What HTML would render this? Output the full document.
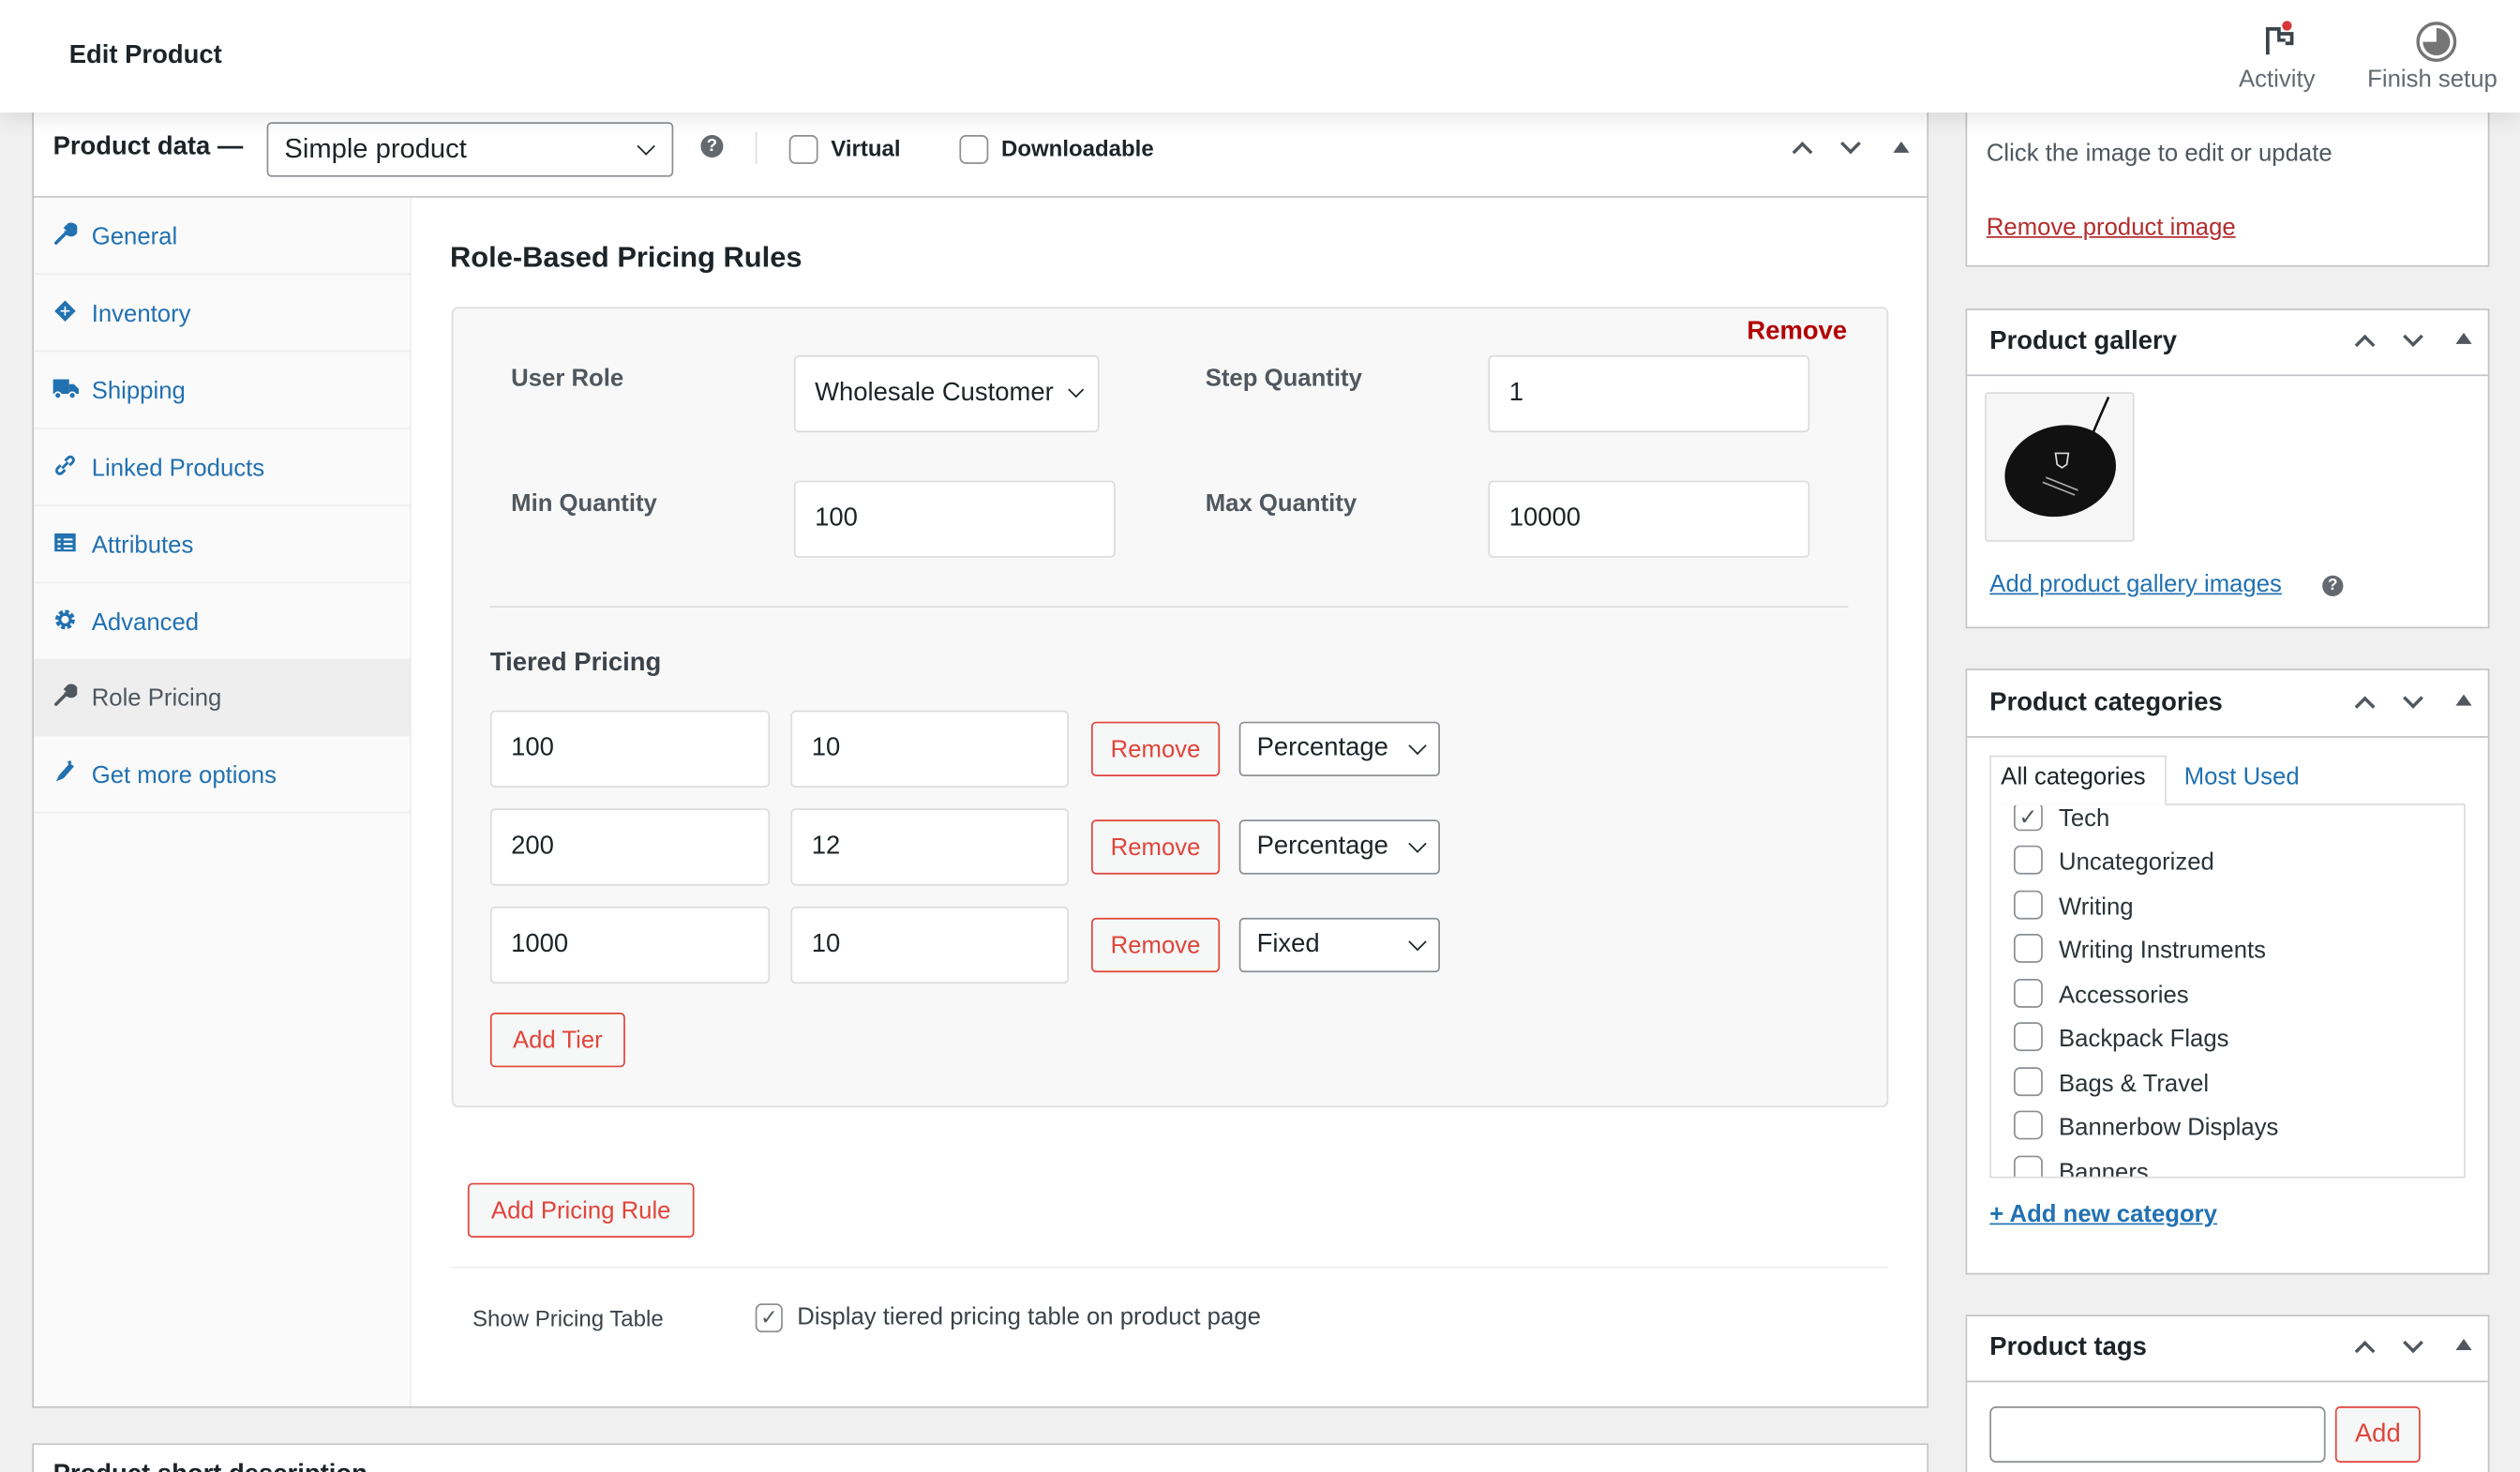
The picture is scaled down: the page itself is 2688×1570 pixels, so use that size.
<!DOCTYPE html>
<html><head><meta charset="utf-8"><style>
*{box-sizing:border-box;margin:0;padding:0}
html,body{width:2688px;height:1570px;overflow:hidden;background:#f0f0f1}
#w{position:absolute;left:0;top:0;width:1568px;height:916px;overflow:hidden;transform:scale(1.71429);transform-origin:0 0;font-family:"Liberation Sans",Arial,sans-serif;color:#1d2327;font-size:15px}
.a{position:absolute}
.t{position:absolute;white-space:nowrap;line-height:1}
.box{position:absolute;background:#fff;border:1px solid #c3c4c7}
.inp{position:absolute;background:#fff;border:1px solid #dcdcde;border-radius:3px;font-size:16px;padding-left:12px;display:flex;align-items:center}
.sel{position:absolute;background:#fff;border:1px solid #8c8f94;border-radius:3px;font-size:16px;padding-left:10px;display:flex;align-items:center}
.btnr{position:absolute;background:#f6f7f7;border:1px solid #e0453a;border-radius:3px;color:#e0453a;font-size:15px;display:flex;align-items:center;justify-content:center}
.chev{position:absolute;width:8px;height:8px;border-right:1.6px solid #1d2327;border-bottom:1.6px solid #1d2327;transform:rotate(45deg)}
.cb{position:absolute;width:18px;height:18px;border:1px solid #8c8f94;border-radius:4px;background:#fff}
.tab{position:absolute;left:21px;width:235px;height:48px;border-bottom:1px solid #eee;color:#2271b1;font-size:15px}
.tab span{position:absolute;left:36px;top:16px}
.tab svg{position:absolute;left:12px;top:15px}
.lbl{position:absolute;font-weight:bold;color:#50575e;font-size:15px;white-space:nowrap}
.arr{position:absolute;width:9px;height:9px;border-left:2px solid #50575e;border-top:2px solid #50575e}
.tri{position:absolute;width:0;height:0;border-left:5px solid transparent;border-right:5px solid transparent;border-bottom:7px solid #50575e}
.h3{position:absolute;font-weight:bold;font-size:16px;white-space:nowrap}
.cat{position:absolute;left:1253px;font-size:15px;color:#2c3338;white-space:nowrap}
.cat .cb{position:relative;display:inline-block;vertical-align:middle;margin-right:10px;top:-2px}
</style></head><body><div id="w">

<!-- header -->
<div class="a" style="left:0;top:0;width:1568px;height:70px;background:#fff;box-shadow:0 2px 14px rgba(0,0,0,.12);z-index:5">
 <div class="t" style="left:43px;top:27px;font-size:16px;font-weight:bold">Edit Product</div>
 <svg class="a" style="left:1408px;top:12px" width="24" height="24" viewBox="0 0 24 24"><path d="M3 22V6h7v3h8v6h-4" fill="none" stroke="#3c434a" stroke-width="2.2"/><path d="M10 9v4h4" fill="none" stroke="#3c434a" stroke-width="2"/><circle cx="15" cy="4" r="3" fill="#d63638"/></svg>
 <div class="t" style="left:1393px;top:42px;font-size:15px;color:#646970">Activity</div>
 <svg class="a" style="left:1503px;top:13px" width="26" height="26" viewBox="0 0 26 26"><circle cx="13" cy="13" r="11.5" fill="none" stroke="#757575" stroke-width="2"/><path d="M13 4.5A8.5 8.5 0 1 1 4.5 13H13Z" fill="#757575"/></svg>
 <div class="t" style="left:1473px;top:42px;font-size:15px;color:#646970">Finish setup</div>
</div>

<!-- main box -->
<div class="box" style="left:20px;top:60px;width:1180px;height:816px"></div>
<div class="a" style="left:21px;top:122px;width:1178px;height:1px;background:#c3c4c7"></div>
<div class="t" style="left:33px;top:84px;font-size:16px;font-weight:bold">Product data —</div>
<div class="sel" style="left:166px;top:76px;width:253px;height:34px;font-size:17px">Simple product<div class="chev" style="left:231px;top:10px;border-width:1.4px"></div></div>
<div class="a" style="left:436px;top:84px;width:14px;height:14px;border-radius:50%;background:#646970;color:#fff;font-size:11px;font-weight:bold;text-align:center;line-height:14px">?</div>
<div class="a" style="left:470px;top:82px;width:1px;height:20px;background:#ddd"></div>
<div class="cb" style="left:491px;top:84px"></div>
<div class="t" style="left:517px;top:85px;font-size:14px;font-weight:bold">Virtual</div>
<div class="cb" style="left:597px;top:84px"></div>
<div class="t" style="left:623px;top:85px;font-size:14px;font-weight:bold">Downloadable</div>
<div class="arr" style="left:1117px;top:90px;transform:rotate(45deg)"></div>
<div class="arr" style="left:1147px;top:85px;transform:rotate(225deg)"></div>
<div class="tri" style="left:1178px;top:88px"></div>

<!-- tabs -->
<div class="a" style="left:21px;top:123px;width:235px;height:752px;background:#fafafa;border-right:1px solid #eee"></div>
<div class="tab" style="top:123px"><svg width="15" height="15" viewBox="0 0 16 16"><path d="M2 14l7-7M9 7a3.5 3.5 0 1 0 1.5-5l-2 2 1.5 1.5 2-2A3.5 3.5 0 0 1 9 7z" fill="#2271b1" stroke="#2271b1" stroke-width="2.2" stroke-linecap="round"/></svg><span>General</span></div>
<div class="tab" style="top:171px"><svg width="15" height="15" viewBox="0 0 16 16"><path d="M8 1l7 7-7 7-7-7z" fill="#2271b1"/><path d="M5 8h6M8 5v6" stroke="#fff" stroke-width="1"/></svg><span>Inventory</span></div>
<div class="tab" style="top:219px"><svg width="16" height="15" viewBox="0 0 16 15"><rect x="0" y="2" width="10" height="9" fill="#2271b1"/><path d="M10 5h3l3 3v3h-6z" fill="#2271b1"/><circle cx="3" cy="12" r="2" fill="#2271b1" stroke="#fafafa"/><circle cx="12" cy="12" r="2" fill="#2271b1" stroke="#fafafa"/></svg><span>Shipping</span></div>
<div class="tab" style="top:267px"><svg width="15" height="15" viewBox="0 0 16 16"><path d="M6 10l4-4M5 8l-2 2a2 2 0 0 0 3 3l2-2M11 8l2-2a2 2 0 0 0-3-3L8 5" fill="none" stroke="#2271b1" stroke-width="1.8"/></svg><span>Linked Products</span></div>
<div class="tab" style="top:315px"><svg width="15" height="15" viewBox="0 0 16 16"><rect x="1" y="2" width="14" height="12" fill="#2271b1"/><path d="M3 6h2M7 6h6M3 9h2M7 9h6M3 12h2M7 12h6" stroke="#fff" stroke-width="1.3"/></svg><span>Attributes</span></div>
<div class="tab" style="top:363px"><svg width="15" height="15" viewBox="0 0 16 16"><circle cx="8" cy="8" r="5" fill="none" stroke="#2271b1" stroke-width="3" stroke-dasharray="2.5 1.4"/><circle cx="8" cy="8" r="3.5" fill="none" stroke="#2271b1" stroke-width="2"/></svg><span>Advanced</span></div>
<div class="tab" style="top:410px;background:#eee;color:#50575e"><svg width="15" height="15" viewBox="0 0 16 16"><path d="M2 14l7-7M9 7a3.5 3.5 0 1 0 1.5-5l-2 2 1.5 1.5 2-2A3.5 3.5 0 0 1 9 7z" fill="#50575e" stroke="#50575e" stroke-width="2.2" stroke-linecap="round"/></svg><span>Role Pricing</span></div>
<div class="tab" style="top:458px"><svg width="15" height="15" viewBox="0 0 16 16"><path d="M2 14l5-2 7-8-3-2-7 8z" fill="#2271b1"/><path d="M10 2l2-1" stroke="#2271b1" stroke-width="2"/></svg><span>Get more options</span></div>

<!-- content -->
<div class="t" style="left:280px;top:151px;font-size:18px;font-weight:bold">Role-Based Pricing Rules</div>
<div class="a" style="left:281px;top:191px;width:894px;height:498px;background:#f8f8f8;border:1px solid #ddd;border-radius:4px"></div>
<div class="t" style="left:1087px;top:199px;font-size:16px;font-weight:bold;color:#b30000">Remove</div>
<div class="lbl" style="left:318px;top:227px">User Role</div>
<div class="inp" style="left:494px;top:221px;width:190px;height:48px">Wholesale Customer<div class="chev" style="left:171px;top:17px;width:7px;height:7px;border-width:1.3px"></div></div>
<div class="lbl" style="left:750px;top:227px">Step Quantity</div>
<div class="inp" style="left:926px;top:221px;width:200px;height:48px">1</div>
<div class="lbl" style="left:318px;top:305px">Min Quantity</div>
<div class="inp" style="left:494px;top:299px;width:200px;height:48px">100</div>
<div class="lbl" style="left:750px;top:305px">Max Quantity</div>
<div class="inp" style="left:926px;top:299px;width:200px;height:48px">10000</div>
<div class="a" style="left:305px;top:377px;width:845px;height:1px;background:#ddd"></div>
<div class="t" style="left:305px;top:405px;font-size:16px;font-weight:bold;color:#3c434a">Tiered Pricing</div>

<div class="inp" style="left:305px;top:442px;width:174px;height:48px">100</div>
<div class="inp" style="left:492px;top:442px;width:173px;height:48px">10</div>
<div class="btnr" style="left:679px;top:449px;width:80px;height:34px">Remove</div>
<div class="sel" style="left:771px;top:449px;width:125px;height:34px">Percentage<div class="chev" style="left:106px;top:10px;border-width:1.4px"></div></div>

<div class="inp" style="left:305px;top:503px;width:174px;height:48px">200</div>
<div class="inp" style="left:492px;top:503px;width:173px;height:48px">12</div>
<div class="btnr" style="left:679px;top:510px;width:80px;height:34px">Remove</div>
<div class="sel" style="left:771px;top:510px;width:125px;height:34px">Percentage<div class="chev" style="left:106px;top:10px;border-width:1.4px"></div></div>

<div class="inp" style="left:305px;top:564px;width:174px;height:48px">1000</div>
<div class="inp" style="left:492px;top:564px;width:173px;height:48px">10</div>
<div class="btnr" style="left:679px;top:571px;width:80px;height:34px">Remove</div>
<div class="sel" style="left:771px;top:571px;width:125px;height:34px">Fixed<div class="chev" style="left:106px;top:10px;border-width:1.4px"></div></div>

<div class="btnr" style="left:305px;top:630px;width:84px;height:34px">Add Tier</div>
<div class="btnr" style="left:291px;top:736px;width:141px;height:34px">Add Pricing Rule</div>
<div class="a" style="left:281px;top:788px;width:894px;height:1px;background:#eee"></div>
<div class="t" style="left:294px;top:813px;font-size:14px;color:#3c434a">Show Pricing Table</div>
<div class="cb" style="left:470px;top:811px;width:17px;height:18px;color:#50575e;font-size:13px;text-align:center;line-height:16px">✓</div>
<div class="t" style="left:496px;top:812px;font-size:15px;color:#3c434a">Display tiered pricing table on product page</div>

<div class="box" style="left:20px;top:898px;width:1180px;height:40px"></div>
<div class="t" style="left:33px;top:910px;font-size:16px;font-weight:bold">Product short description</div>

<!-- right column -->
<div class="box" style="left:1223px;top:60px;width:326px;height:106px"></div>
<div class="t" style="left:1236px;top:88px;font-size:15px;color:#50575e">Click the image to edit or update</div>
<div class="t" style="left:1236px;top:134px;font-size:15px;color:#b32d2e;text-decoration:underline">Remove product image</div>

<div class="box" style="left:1223px;top:192px;width:326px;height:199px"></div>
<div class="a" style="left:1224px;top:233px;width:324px;height:1px;background:#c3c4c7"></div>
<div class="h3" style="left:1238px;top:204px">Product gallery</div>
<div class="arr" style="left:1467px;top:210px;transform:rotate(45deg)"></div>
<div class="arr" style="left:1497px;top:205px;transform:rotate(225deg)"></div>
<div class="tri" style="left:1528px;top:207px"></div>
<div class="a" style="left:1235px;top:244px;width:93px;height:93px;background:#f6f6f6;border:1px solid #dcdcde;border-radius:2px;overflow:hidden">
 <svg width="93" height="93" viewBox="0 0 93 93"><path d="M64 30 Q68 20 76 2" stroke="#111" stroke-width="1.5" fill="none"/><ellipse cx="46" cy="48" rx="35" ry="28" fill="#111" transform="rotate(-15 46 48)"/><path d="M43 37h8l-1 7-3 2-3-2z" fill="none" stroke="#ddd" stroke-width="1"/><path d="M37 52l20 8M35 55l20 8" stroke="#aaa" stroke-width="1"/></svg>
</div>
<div class="t" style="left:1238px;top:356px;font-size:15px;color:#2271b1;text-decoration:underline">Add product gallery images</div>
<div class="a" style="left:1445px;top:358px;width:13px;height:13px;border-radius:50%;background:#646970;color:#fff;font-size:10px;font-weight:bold;text-align:center;line-height:13px">?</div>

<div class="box" style="left:1223px;top:416px;width:326px;height:377px"></div>
<div class="a" style="left:1224px;top:458px;width:324px;height:1px;background:#c3c4c7"></div>
<div class="h3" style="left:1238px;top:429px">Product categories</div>
<div class="arr" style="left:1467px;top:435px;transform:rotate(45deg)"></div>
<div class="arr" style="left:1497px;top:430px;transform:rotate(225deg)"></div>
<div class="tri" style="left:1528px;top:432px"></div>
<div class="a" style="left:1238px;top:500px;width:296px;height:233px;border:1px solid #dcdcde;background:#fff;overflow:hidden"></div>
<div class="a" style="left:1238px;top:470px;width:110px;height:31px;border:1px solid #dcdcde;border-bottom:none;background:#fff"></div>
<div class="t" style="left:1245px;top:476px;font-size:15px">All categories</div>
<div class="t" style="left:1359px;top:476px;font-size:15px;color:#2271b1">Most Used</div>
<div class="a" style="left:1239px;top:501px;width:294px;height:231px;overflow:hidden">
 <div class="cat" style="left:14px;top:0px"><span class="cb" style="color:#50575e;font-size:14px;text-align:center;line-height:16px">✓</span>Tech</div>
 <div class="cat" style="left:14px;top:27px"><span class="cb"></span>Uncategorized</div>
 <div class="cat" style="left:14px;top:55px"><span class="cb"></span>Writing</div>
 <div class="cat" style="left:14px;top:82px"><span class="cb"></span>Writing Instruments</div>
 <div class="cat" style="left:14px;top:110px"><span class="cb"></span>Accessories</div>
 <div class="cat" style="left:14px;top:137px"><span class="cb"></span>Backpack Flags</div>
 <div class="cat" style="left:14px;top:165px"><span class="cb"></span>Bags &amp; Travel</div>
 <div class="cat" style="left:14px;top:192px"><span class="cb"></span>Bannerbow Displays</div>
 <div class="cat" style="left:14px;top:220px"><span class="cb"></span>Banners</div>
</div>
<div class="t" style="left:1238px;top:748px;font-size:15px;color:#2271b1;text-decoration:underline;font-weight:bold">+ Add new category</div>

<div class="box" style="left:1223px;top:818px;width:326px;height:120px"></div>
<div class="a" style="left:1224px;top:859px;width:324px;height:1px;background:#c3c4c7"></div>
<div class="h3" style="left:1238px;top:830px">Product tags</div>
<div class="arr" style="left:1467px;top:836px;transform:rotate(45deg)"></div>
<div class="arr" style="left:1497px;top:831px;transform:rotate(225deg)"></div>
<div class="tri" style="left:1528px;top:833px"></div>
<div class="a" style="left:1238px;top:875px;width:209px;height:35px;border:1px solid #8c8f94;border-radius:4px;background:#fff"></div>
<div class="btnr" style="left:1453px;top:875px;width:53px;height:35px;font-size:16px">Add</div>

</div></body></html>
